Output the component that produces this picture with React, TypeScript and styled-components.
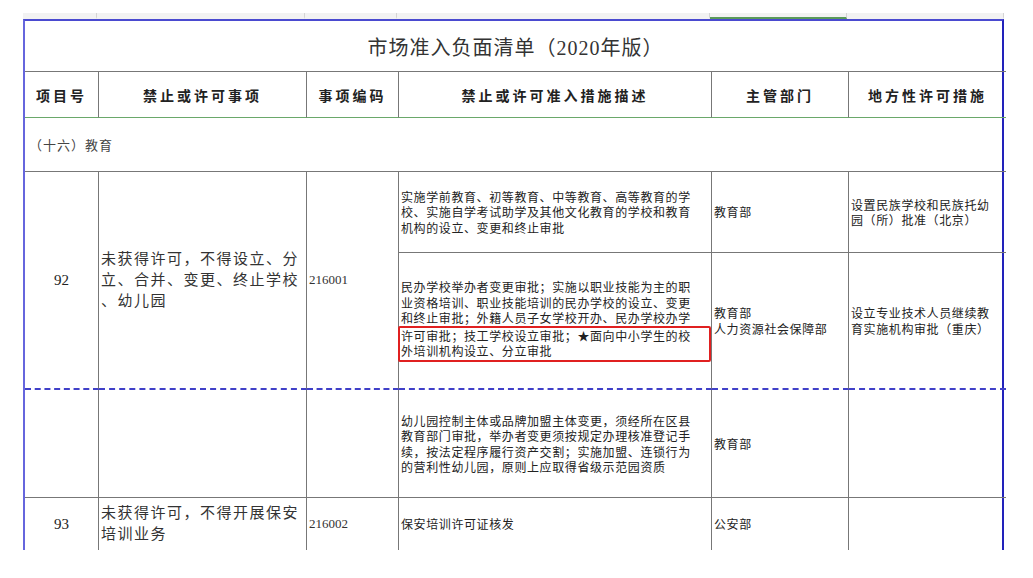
import styled, { createGlobalStyle } from "styled-components";

const Global = createGlobalStyle`
  html, body { margin: 0; background: #fff; }
  body { font-family: "Noto Sans CJK SC", sans-serif; color: #222; }
`;

const Page = styled.div`
  width: 1033px;
  height: 578px;
  padding: 13px 0 0 23px;
  box-sizing: border-box;
  overflow: hidden;
`;

const Strip = styled.div`
  display: grid;
  grid-template-columns: 74px 208px 92px 313px 137px 157px;
  width: 981px;
  height: 6px;
  background: #f2f2f2;
`;

const StripCell = styled.div<{ $green?: boolean }>`
  border-right: 1px solid #d4d4d4;
  border-bottom: 2px solid ${(p) => (p.$green ? "#5a9a5a" : "transparent")};
`;

const Table = styled.div`
  display: grid;
  grid-template-columns: 74px 208px 92px 313px 137px 157px;
  grid-template-rows: 51px 46px 54px 81px 137px 108px 52px;
  width: 981px;
  border-top: 2px solid #4a4ad0;
  border-left: 2px solid #6666dd;
  border-right: 2px solid #2222bb;
  box-sizing: border-box;
`;

const Cell = styled.div<{
  $col?: string;
  $row?: string;
  $align?: "center" | "left";
  $bottom?: "solid" | "dashed" | "green" | "none";
  $noRight?: boolean;
}>`
  grid-column: ${(p) => p.$col || "auto"};
  grid-row: ${(p) => p.$row || "auto"};
  display: flex;
  flex-direction: column;
  justify-content: center;
  align-items: ${(p) => (p.$align === "left" ? "flex-start" : "center")};
  padding: 0 2px;
  border-right: ${(p) => (p.$noRight ? "none" : "1px solid #777")};
  border-bottom: ${(p) =>
    p.$bottom === "dashed"
      ? "2px dashed #4040c8"
      : p.$bottom === "green"
      ? "1px solid #6aa86a"
      : p.$bottom === "none"
      ? "none"
      : "1px solid #777"};
  box-sizing: border-box;
  min-width: 0;
`;

const Title = styled.div`
  font-family: "Liberation Serif", "Noto Sans CJK SC", serif;
  font-size: 20px;
  letter-spacing: 1px;
  color: #333;
`;

const Head = styled.div`
  font-family: "Noto Sans CJK SC", serif;
  font-weight: 700;
  font-size: 14px;
  letter-spacing: 3px;
  color: #222;
`;

const Section = styled.div`
  font-size: 13px;
  letter-spacing: 1px;
  color: #444;
  padding-left: 2px;
`;

const Big = styled.div`
  font-family: "Liberation Serif", "Noto Sans CJK SC", serif;
  font-size: 15px;
  line-height: 21px;
  color: #333;
  letter-spacing: 1.5px;
`;

const Num = styled.div`
  font-family: "Liberation Serif", serif;
  font-size: 15px;
  color: #222;
`;

const Code = styled.div`
  font-family: "Liberation Serif", serif;
  font-size: 13px;
  color: #333;
`;

const Small = styled.div`
  font-size: 12px;
  line-height: 15.5px;
  letter-spacing: 0.6px;
  color: #222;
  white-space: nowrap;
`;

const Boxed = styled.div`
  border: 2px solid #e02020;
  border-radius: 2px;
  margin: 0 -2px 0 -3px;
  padding: 0 0 1px 1px;
  align-self: stretch;
`;

const Lines = ({ lines }: { lines: string[] }) => (
  <>
    {lines.map((l, i) => (
      <Small key={i}>{l}</Small>
    ))}
  </>
);

export default function App() {
  return (
    <Page>
      <Global />
      <Strip>
        <StripCell />
        <StripCell />
        <StripCell />
        <StripCell />
        <StripCell $green />
        <StripCell />
      </Strip>
      <Table>
        <Cell $col="1 / 7" $row="1" $noRight>
          <Title>市场准入负面清单（2020年版）</Title>
        </Cell>
        <Cell $bottom="green"><Head>项目号</Head></Cell>
        <Cell $bottom="green"><Head>禁止或许可事项</Head></Cell>
        <Cell $bottom="green"><Head>事项编码</Head></Cell>
        <Cell $bottom="green"><Head>禁止或许可准入措施描述</Head></Cell>
        <Cell $bottom="green"><Head>主管部门</Head></Cell>
        <Cell $bottom="green" $noRight><Head>地方性许可措施</Head></Cell>
        <Cell $col="1 / 7" $row="3" $align="left" $noRight>
          <Section>（十六）教育</Section>
        </Cell>

        <Cell $col="1" $row="4 / 6" $bottom="dashed"><Num>92</Num></Cell>
        <Cell $col="2" $row="4 / 6" $bottom="dashed" $align="left">
          <Big>未获得许可，不得设立、分</Big>
          <Big>立、合并、变更、终止学校</Big>
          <Big>、幼儿园</Big>
        </Cell>
        <Cell $col="3" $row="4 / 6" $bottom="dashed" $align="left">
          <Code>216001</Code>
        </Cell>
        <Cell $col="4" $row="4" $align="left">
          <Lines lines={["实施学前教育、初等教育、中等教育、高等教育的学", "校、实施自学考试助学及其他文化教育的学校和教育", "机构的设立、变更和终止审批"]} />
        </Cell>
        <Cell $col="5" $row="4" $align="left"><Small>教育部</Small></Cell>
        <Cell $col="6" $row="4" $align="left" $noRight>
          <Lines lines={["设置民族学校和民族托幼", "园（所）批准（北京）"]} />
        </Cell>

        <Cell $col="4" $row="5" $align="left" $bottom="dashed">
          <Lines lines={["民办学校举办者变更审批；实施以职业技能为主的职", "业资格培训、职业技能培训的民办学校的设立、变更", "和终止审批；外籍人员子女学校开办、民办学校办学"]} />
          <Boxed>
            <Lines lines={["许可审批；技工学校设立审批；★面向中小学生的校", "外培训机构设立、分立审批"]} />
          </Boxed>
        </Cell>
        <Cell $col="5" $row="5" $align="left" $bottom="dashed">
          <Lines lines={["教育部", "人力资源社会保障部"]} />
        </Cell>
        <Cell $col="6" $row="5" $align="left" $bottom="dashed" $noRight>
          <Lines lines={["设立专业技术人员继续教", "育实施机构审批（重庆）"]} />
        </Cell>

        <Cell $col="1" $row="6" />
        <Cell $col="2" $row="6" />
        <Cell $col="3" $row="6" />
        <Cell $col="4" $row="6" $align="left">
          <Lines lines={["幼儿园控制主体或品牌加盟主体变更，须经所在区县", "教育部门审批，举办者变更须按规定办理核准登记手", "续，按法定程序履行资产交割；实施加盟、连锁行为", "的营利性幼儿园，原则上应取得省级示范园资质"]} />
        </Cell>
        <Cell $col="5" $row="6" $align="left"><Small>教育部</Small></Cell>
        <Cell $col="6" $row="6" $noRight />

        <Cell $row="7" $bottom="none"><Num>93</Num></Cell>
        <Cell $row="7" $bottom="none" $align="left">
          <Big>未获得许可，不得开展保安</Big>
          <Big>培训业务</Big>
        </Cell>
        <Cell $row="7" $bottom="none" $align="left"><Code>216002</Code></Cell>
        <Cell $row="7" $bottom="none" $align="left"><Small>保安培训许可证核发</Small></Cell>
        <Cell $row="7" $bottom="none" $align="left"><Small>公安部</Small></Cell>
        <Cell $row="7" $bottom="none" $noRight />
      </Table>
    </Page>
  );
}
